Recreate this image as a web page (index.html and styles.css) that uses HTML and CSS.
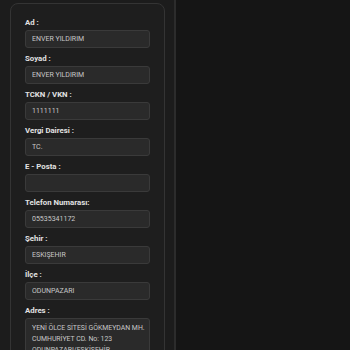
FILE: index.html
```html
<!DOCTYPE html>
<html lang="tr">
<head>
  <meta charset="utf-8">
  <title>Müşteri Bilgileri</title>
  <link rel="stylesheet" href="styles.css">
</head>
<body>
  <div class="side-panel">
    <form class="customer-card">
      <label class="field-label">Ad :</label>
      <input class="field-input" type="text" value="ENVER YILDIRIM">

      <label class="field-label">Soyad :</label>
      <input class="field-input" type="text" value="ENVER YILDIRIM">

      <label class="field-label">TCKN / VKN :</label>
      <input class="field-input" type="text" value="1111111">

      <label class="field-label">Vergi Dairesi :</label>
      <input class="field-input" type="text" value="TC.">

      <label class="field-label">E - Posta :</label>
      <input class="field-input" type="text" value="">

      <label class="field-label">Telefon Numarası:</label>
      <input class="field-input" type="text" value="05535341172">

      <label class="field-label">Şehir :</label>
      <input class="field-input" type="text" value="ESKİŞEHİR">

      <label class="field-label">İlçe :</label>
      <input class="field-input" type="text" value="ODUNPAZARI">

      <label class="field-label">Adres :</label>
      <textarea class="field-input field-area">YENİ ÖLCE SİTESİ GÖKMEYDAN MH. CUMHURİYET CD. No: 123 ODUNPAZARI/ESKİŞEHİR</textarea>
    </form>
  </div>
</body>
</html>
```

FILE: styles.css
```css
html, body {
  margin: 0;
  height: 100%;
}

body {
  background-color: #151515;
  font-family: Roboto, "Liberation Sans", sans-serif;
  overflow: hidden;
}

.side-panel {
  width: 176px;
  height: 100%;
  background-color: #1c1c1c;
  border-right: 2px solid #2c2c2c;
  padding: 3px 9px 0 10px;
  box-sizing: border-box;
}

.customer-card {
  display: flex;
  flex-direction: column;
  border: 1px solid #343434;
  border-radius: 8px;
  background-color: #1e1e1e;
  padding: 14px 14px 20px 14px;
  height: 500px;
}

.field-label {
  color: #e2e2e2;
  font-size: 7.8px;
  font-weight: bold;
  line-height: 9px;
  margin-bottom: 3px;
}

.field-input {
  height: 18px;
  box-sizing: border-box;
  border: 1px solid #3a3a3a;
  border-radius: 3px;
  background-color: #2a2a2a;
  color: #c8c8c8;
  font-family: inherit;
  font-size: 7px;
  padding: 0 6px;
  margin: 0 0 6px 0;
  outline: none;
}

.field-area {
  height: 40px;
  padding: 4px 2px 4px 6px;
  font-size: 6.9px;
  line-height: 11px;
  resize: none;
  overflow: hidden;
}
```
